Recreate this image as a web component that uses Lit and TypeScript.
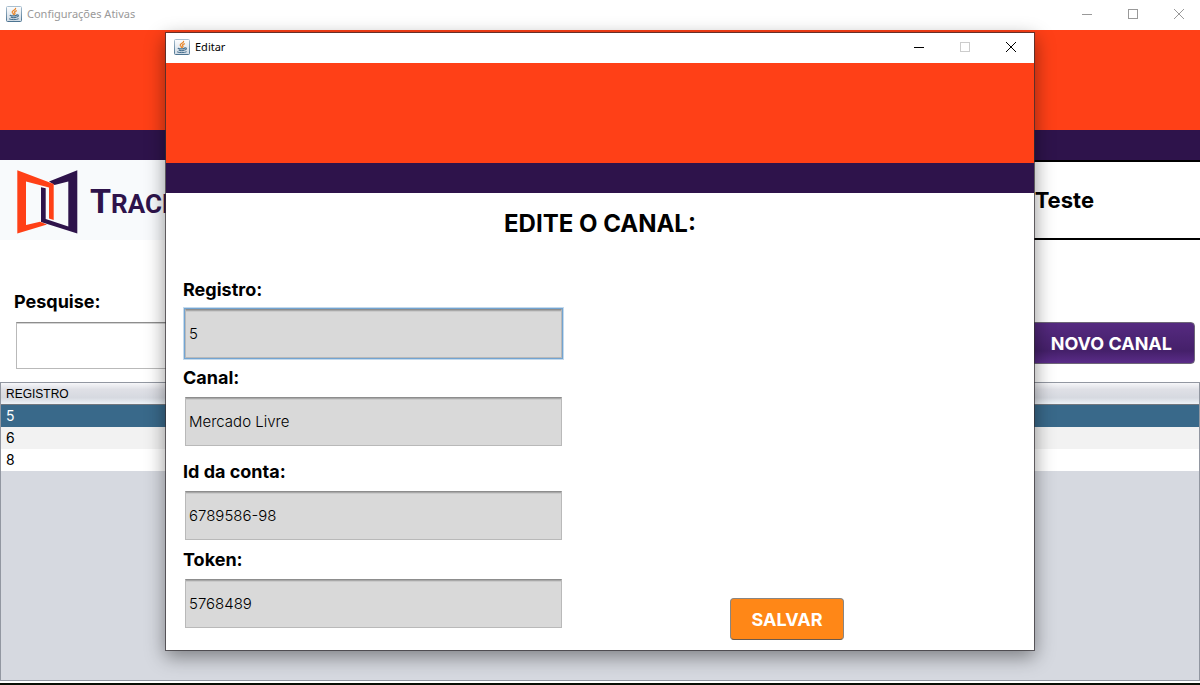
import { LitElement, html, css, svg } from "lit";
import { customElement, property } from "lit/decorators.js";

interface Field {
  id: string;
  label: string;
  value: string;
}

const groups: Field[][] = [
  [
    { id: "registro", label: "Registro:", value: "5" },
    { id: "canal", label: "Canal:", value: "Mercado Livre" },
  ],
  [
    { id: "conta", label: "Id da conta:", value: "6789586-98" },
    { id: "token", label: "Token:", value: "5768489" },
  ],
];

const rows = ["5", "6", "8"];

@customElement("title-bar")
export class TitleBar extends LitElement {
  @property() caption = "";
  @property({ type: Boolean }) inactive = false;
  @property({ type: Boolean }) fixed = false;

  static styles = css`
    :host {
      display: block;
      background: #fff;
      overflow: hidden;
    }
    .bar {
      display: flex;
      align-items: center;
      box-sizing: border-box;
      height: 30px;
      padding-bottom: 2px;
      color: #000;
    }
    .inactive {
      color: #999;
    }
    .inactive .controls {
      margin-right: -2px;
    }
    .java {
      width: 16px;
      height: 16px;
      margin: 0 5px 0 8px;
      flex: none;
    }
    .inactive .java {
      margin-left: 6px;
    }
    .caption {
      flex: 1;
      font: 11px/28px "Noto Sans", sans-serif;
      white-space: nowrap;
    }
    .controls {
      display: flex;
      flex: none;
    }
    button {
      display: flex;
      align-items: center;
      justify-content: center;
      width: 46px;
      height: 28px;
      padding: 0;
      border: 0;
      background: none;
      color: inherit;
    }
    button:disabled {
      color: #ccc;
    }
    button svg {
      width: 10px;
      height: 10px;
      fill: none;
      stroke: currentColor;
    }
  `;

  render() {
    return html`
      <div class="bar ${this.inactive ? "inactive" : ""}">
        <svg class="java" viewBox="0 0 16 16" aria-hidden="true">
          <defs>
            <linearGradient id="g" x1="0" y1="0" x2="0" y2="1">
              <stop offset="0" stop-color="#fdfdfe" />
              <stop offset="1" stop-color="#cfdae4" />
            </linearGradient>
            <linearGradient id="b" x1="0" y1="0" x2="0" y2="1">
              <stop offset="0" stop-color="#a9bfd0" />
              <stop offset="1" stop-color="#4d7491" />
            </linearGradient>
          </defs>
          <rect x=".5" y=".5" width="15" height="15" rx="1" fill="url(#g)" stroke="url(#b)" />
          <g fill="none" stroke-linecap="round">
            <path d="M9.600 2.300C9.800 4 6 4.500 6.200 6.200 6.400 7 7.600 7.300 7.400 8.300M10.400 4.800C8.500 5.400 8.200 6.200 8.900 7 9.200 7.500 8.900 8 8.500 8.400" stroke="#e8862b" stroke-width="1.300" />
            <path d="M4.200 9.400C5.500 9.900 8.900 9.900 10.300 9.400M10.800 8.900C13 8.600 12.700 10.600 10.700 11M5.200 11.300C6.600 11.800 8.800 11.800 9.900 11.300" stroke="#47708f" stroke-width="1.200" />
            <path d="M3.400 13C5 13.900 10.500 13.900 12.300 12.900" stroke="#47708f" />
          </g>
        </svg>
        <span class="caption">${this.caption}</span>
        <div class="controls">
          <button aria-label="Minimizar">
            <svg viewBox="0 0 10 10">${svg`<path d="M0 5.500H10" />`}</svg>
          </button>
          <button aria-label="Maximizar" ?disabled=${this.fixed}>
            <svg viewBox="0 0 10 10">${svg`<rect x=".5" y=".5" width="9" height="9" />`}</svg>
          </button>
          <button aria-label="Fechar">
            <svg viewBox="0 0 10 10">${svg`<path d="M0 0L10 10M10 0L0 10" />`}</svg>
          </button>
        </div>
      </div>
    `;
  }
}

@customElement("edit-dialog")
export class EditDialog extends LitElement {
  static styles = css`
    :host {
      display: block;
      box-sizing: border-box;
      width: 870px;
      max-width: 100%;
      border: 1px solid rgba(50, 45, 50, 0.7);
      background: #fff;
      background-clip: padding-box;
      box-shadow: 0 6px 18px rgba(0, 0, 0, 0.42);
      font-family: Inter, sans-serif;
      color: #000;
    }
    .banner {
      height: 100px;
      background: #ff4017;
      border-bottom: 30px solid #2e134b;
    }
    h1 {
      margin: 0;
      padding: 15px 0 39px;
      font-size: 24px;
      line-height: 31px;
      font-weight: 700;
      text-align: center;
    }
    form {
      display: grid;
      grid-template-columns: 379px 1fr;
      padding: 0 22px 22px 17px;
    }
    .fields,
    .group {
      display: flex;
      flex-direction: column;
    }
    .fields {
      gap: 14px;
    }
    .group {
      gap: 8px;
    }
    .field {
      display: flex;
      flex-direction: column;
      gap: 7px;
    }
    label {
      font-size: 18px;
      line-height: 24px;
      font-weight: 700;
    }
    input {
      box-sizing: border-box;
      height: 49px;
      margin: 0 0 0 2px;
      padding: 0 3px;
      border: 1px solid #b9b9b9;
      border-top: 1px solid #8d8d8d;
      border-radius: 0;
      background: #d9d9d9;
      box-shadow: inset 0 1px #a8a8a8, inset 0 2px #cacaca;
      font: 300 15px Inter, sans-serif;
      color: #000;
      outline: none;
    }
    .focused {
      box-shadow: inset 0 1px #a8a8a8, inset 0 2px #cacaca, 0 0 0 1px #73a4d1,
        0 0 0 2px #c5daec;
    }
    .save {
      align-self: end;
      justify-self: center;
      height: 42px;
      margin-bottom: -12px;
      padding: 0 20px;
      border: 1px solid #8a8580;
      border-bottom-color: #6b5a4c;
      border-radius: 4px;
      background: #ff8717;
      color: #fff;
      font: 700 18px Inter, sans-serif;
    }
  `;

  render() {
    return html`
      <title-bar caption="Editar" fixed></title-bar>
      <div class="banner"></div>
      <h1>EDITE O CANAL:</h1>
      <form @submit=${(e: Event) => e.preventDefault()}>
        <div class="fields">
          ${groups.map(
            (group) => html`<div class="group">
              ${group.map(
                (f) => html`<div class="field">
                  <label for=${f.id}>${f.label}</label>
                  <input
                    id=${f.id}
                    class=${f.id === "registro" ? "focused" : ""}
                    .value=${f.value}
                  />
                </div>`
              )}
            </div>`
          )}
        </div>
        <button class="save">SALVAR</button>
      </form>
    `;
  }
}

@customElement("app-root")
export class AppRoot extends LitElement {
  static styles = css`
    :host {
      display: block;
      position: relative;
      overflow: hidden;
      color: #000;
      font-family: Inter, sans-serif;
    }
    .window {
      display: flex;
      flex-direction: column;
      height: 100vh;
      box-sizing: border-box;
      background: #fff;
      border-bottom: 2px solid #0a0f05;
    }
    .banner {
      flex: none;
      height: 100px;
      background: #ff4017;
      border-bottom: 30px solid #2e134b;
    }
    header {
      display: flex;
      flex: none;
      height: 80px;
    }
    .brand {
      display: flex;
      align-items: center;
      width: 300px;
      background: #f8fafc;
      color: #2e134b;
    }
    .mark {
      width: 64px;
      height: 66px;
      margin: 4px 10px 0 16px;
    }
    .name {
      padding-top: 4px;
      font: 700 26px/40px Roboto, sans-serif;
      text-transform: uppercase;
    }
    .initial {
      font-size: 34px;
    }
    .account {
      flex: 1;
      box-sizing: border-box;
      padding-right: 106px;
      border: solid #000;
      border-width: 2px 0;
      font-size: 22px;
      line-height: 76px;
      font-weight: 700;
      text-align: right;
    }
    .search {
      display: flex;
      justify-content: space-between;
      align-items: flex-end;
      padding: 50px 5px 13px 14px;
    }
    .query {
      display: flex;
      flex-direction: column;
      gap: 8px;
    }
    label {
      font-size: 18px;
      line-height: 24px;
      font-weight: 700;
    }
    input {
      box-sizing: border-box;
      width: 380px;
      height: 47px;
      margin: 0 0 0 2px;
      border: 1px solid #b9b9b9;
      border-top-color: #8d8d8d;
      border-radius: 0;
      box-shadow: inset 0 1px #d4d4d4;
      font: 300 15px Inter, sans-serif;
      outline: none;
    }
    .new {
      height: 42px;
      margin-bottom: 5px;
      padding: 0 22px;
      border: 1px solid #6e6678;
      border-radius: 4px;
      background: linear-gradient(#552a80, #45206a 70%, #5a2c88);
      color: #fff;
      font: 700 18px Inter, sans-serif;
    }
    .list {
      flex: 1;
      margin-bottom: 2px;
      border: 1px solid #9297a1;
      background: #d6d9e0;
    }
    table {
      width: 100%;
      border-collapse: collapse;
      font-size: 14px;
      line-height: 22px;
    }
    th {
      height: 21px;
      padding: 0 5px;
      border-bottom: 1px solid #73787f;
      background: linear-gradient(#f6f6f9, #dfe0e6 30%, #d6d9e0 70%, #eef3f8);
      font: 12px/20px "Liberation Sans", sans-serif;
      text-align: left;
    }
    td {
      height: 22px;
      padding: 0 5px;
      background: #fff;
    }
    tr:nth-child(even) td {
      background: #f2f2f2;
    }
    .selected td {
      background: #39698a;
      color: #fff;
    }
    .overlay {
      position: absolute;
      inset: 0;
      display: flex;
      align-items: flex-start;
      justify-content: center;
      padding-top: 32px;
    }
  `;

  render() {
    return html`
      <main class="window">
        <title-bar caption="Configurações Ativas" inactive></title-bar>
        <div class="banner"></div>
        <header>
          <div class="brand">
            <svg class="mark" viewBox="0 0 64 66" aria-hidden="true">
              <path fill="#2e134b" fill-rule="evenodd" d="M33 12.500L61.300 1.300V64.500L25 53V18.300L29.700 19.300V50L52.300 57.500V12.500L38.500 16Z" />
              <path fill="#ff4017" fill-rule="evenodd" d="M1.300 1.300L37.700 15V51L33 49.500V18.500L10 12.500V56L24 52.700L31 55.500L1.300 64.500Z" />
            </svg>
            <span class="name"><span class="initial">T</span>rack</span>
          </div>
          <div class="account">Teste</div>
        </header>
        <div class="search">
          <div class="query">
            <label for="query">Pesquise:</label>
            <input id="query" />
          </div>
          <button class="new">NOVO CANAL</button>
        </div>
        <div class="list">
          <table>
            <thead>
              <tr><th>REGISTRO</th></tr>
            </thead>
            <tbody>
              ${rows.map(
                (r, i) => html`<tr class=${i === 0 ? "selected" : ""}><td>${r}</td></tr>`
              )}
            </tbody>
          </table>
        </div>
      </main>
      <div class="overlay">
        <edit-dialog role="dialog" aria-label="Editar"></edit-dialog>
      </div>
    `;
  }
}
